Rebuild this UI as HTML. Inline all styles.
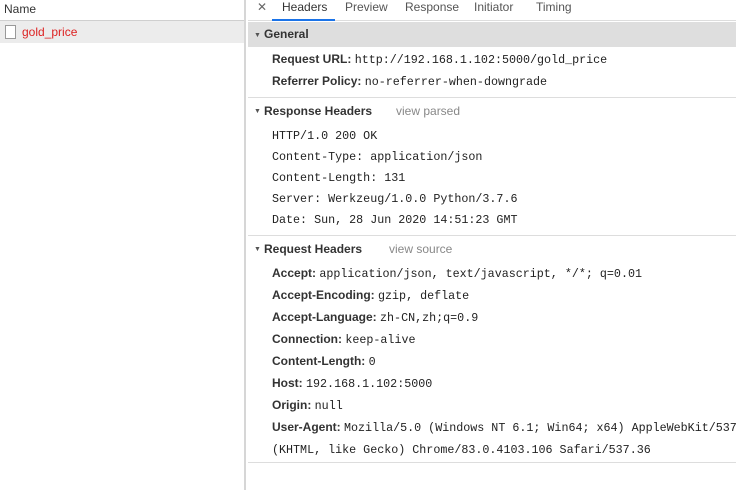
<!DOCTYPE html>
<html><head><meta charset="utf-8"><style>
*{margin:0;padding:0;box-sizing:border-box}
body{width:736px;height:490px;overflow:hidden;background:#fff;font-family:"Liberation Sans",sans-serif;font-size:12px;color:#222;position:relative}
.left{position:absolute;left:0;top:0;width:246px;height:490px;border-right:2px solid #d6d6d6}
.nh{height:21px;border-bottom:1px solid #cfcfcf;padding:2px 0 0 4px;color:#333}
.row{height:22px;background:#ececec;position:relative}
.row .ic{position:absolute;left:5px;top:4px;width:11px;height:14px;border:1px solid #999;background:#fff}
.row span{position:absolute;left:22px;top:4px;color:#d22}
.right{position:absolute;left:248px;top:0;right:0}
.tabs{height:21px;position:relative;border-bottom:1px solid #ddd}
.tabs span{position:absolute;top:0;color:#555}
.ul{position:absolute;left:24px;top:19px;width:63px;height:2px;background:#1a73e8}
.sec{position:absolute;left:0;right:0;font-weight:bold;color:#333}
.sec .t{position:absolute;left:16px}
.sec .ar{position:absolute;left:6px;font-size:7px;top:4px;color:#555}
.sec .v{position:absolute;font-weight:normal;color:#888}
.gen{top:22px;height:25px;background:#dedede}
.gen .t,.gen .ar{top:5px}.gen .ar{top:10px}
.l{position:absolute;left:24px;white-space:nowrap}
.l b{font-weight:bold;color:#333}
.l m{font-family:"Liberation Mono",monospace;font-size:11.7px;color:#222}
.hr{position:absolute;left:0;right:0;height:1px;background:#ddd}
</style></head><body>
<div class="left">
<div class="nh">Name</div>
<div class="row"><div class="ic"></div><span>gold_price</span></div>
</div>
<div class="right">
<div class="tabs">
<span style="left:9px;color:#666">✕</span>
<span style="left:34px;color:#333">Headers</span>
<span style="left:97px">Preview</span>
<span style="left:157px">Response</span>
<span style="left:226px">Initiator</span>
<span style="left:288px">Timing</span>
<div class="ul"></div>
</div>
<div class="sec gen"><span class="ar">▼</span><span class="t">General</span></div>
<div class="l" style="top:52px"><b>Request URL:</b> <m>http://192.168.1.102:5000/gold_price</m></div>
<div class="l" style="top:74px"><b>Referrer Policy:</b> <m>no-referrer-when-downgrade</m></div>
<div class="hr" style="top:97px"></div>
<div class="sec" style="top:104px;height:16px"><span class="ar" style="top:4px">▼</span><span class="t">Response Headers</span><span class="v" style="left:148px">view parsed</span></div>
<div class="l" style="top:128px"><m>HTTP/1.0 200 OK</m></div>
<div class="l" style="top:149px"><m>Content-Type: application/json</m></div>
<div class="l" style="top:170px"><m>Content-Length: 131</m></div>
<div class="l" style="top:191px"><m>Server: Werkzeug/1.0.0 Python/3.7.6</m></div>
<div class="l" style="top:212px"><m>Date: Sun, 28 Jun 2020 14:51:23 GMT</m></div>
<div class="hr" style="top:235px"></div>
<div class="sec" style="top:242px;height:16px"><span class="ar" style="top:4px">▼</span><span class="t">Request Headers</span><span class="v" style="left:141px">view source</span></div>
<div class="l" style="top:266px"><b>Accept:</b> <m>application/json, text/javascript, */*; q=0.01</m></div>
<div class="l" style="top:288px"><b>Accept-Encoding:</b> <m>gzip, deflate</m></div>
<div class="l" style="top:310px"><b>Accept-Language:</b> <m>zh-CN,zh;q=0.9</m></div>
<div class="l" style="top:332px"><b>Connection:</b> <m>keep-alive</m></div>
<div class="l" style="top:354px"><b>Content-Length:</b> <m>0</m></div>
<div class="l" style="top:376px"><b>Host:</b> <m>192.168.1.102:5000</m></div>
<div class="l" style="top:398px"><b>Origin:</b> <m>null</m></div>
<div class="l" style="top:420px"><b>User-Agent:</b> <m>Mozilla/5.0 (Windows NT 6.1; Win64; x64) AppleWebKit/537.36</m></div>
<div class="l" style="top:442px"><m>(KHTML, like Gecko) Chrome/83.0.4103.106 Safari/537.36</m></div>
<div class="hr" style="top:462px"></div>
</div>
</body></html>
